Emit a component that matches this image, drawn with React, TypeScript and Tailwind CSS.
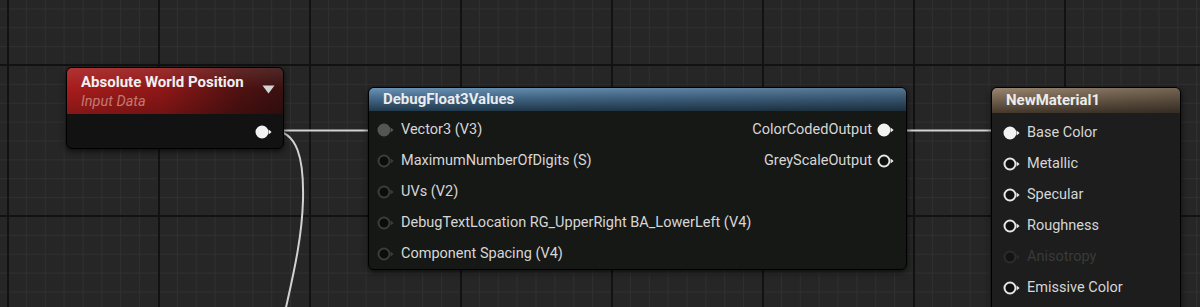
import React from "react";

type PinKind = "filled" | "outline" | "dim" | "connectedGray" | "emptyGray";

function Pin({ kind }: { kind: PinKind }) {
  let stroke = "#e6e6e6";
  let fill = "#101010";
  let arrow = "#e6e6e6";
  if (kind === "filled") {
    fill = "#f2f2f2";
    stroke = "#f2f2f2";
    arrow = "#f2f2f2";
  } else if (kind === "dim") {
    stroke = "#2c2c2c";
    fill = "#141414";
    arrow = "#2c2c2c";
  } else if (kind === "connectedGray") {
    stroke = "#555555";
    fill = "#555555";
    arrow = "#555555";
  } else if (kind === "emptyGray") {
    stroke = "#3c3c3c";
    fill = "#0c0c0c";
    arrow = "#3c3c3c";
  }
  return (
    <svg width="18" height="16" viewBox="0 0 18 16" className="shrink-0">
      <circle cx="7" cy="8" r="5.5" fill={fill} stroke={stroke} strokeWidth="2" />
      <path d="M13.7 5.5 L16.6 8 L13.7 10.5 Z" fill={arrow} />
    </svg>
  );
}

function InRow({ label, kind, dim }: { label: string; kind: PinKind; dim?: boolean }) {
  return (
    <div className="flex h-[31px] items-center whitespace-nowrap">
      <Pin kind={kind} />
      <span className={`ml-[6px] whitespace-nowrap text-[14.5px] ${dim ? "text-[#3a3a3a]" : "text-[#d6d6d6]"}`}>{label}</span>
    </div>
  );
}

function OutRow({ label, kind }: { label: string; kind: PinKind }) {
  return (
    <div className="flex h-[31px] items-center justify-end whitespace-nowrap">
      <span className="mr-[5px] whitespace-nowrap text-[14.5px] text-[#d6d6d6]">{label}</span>
      <Pin kind={kind} />
    </div>
  );
}

export default function App() {
  return (
    <div
      className="relative h-[307px] w-[1200px] overflow-hidden bg-[#262626] [background-image:linear-gradient(to_right,#121212_2px,transparent_2px),linear-gradient(to_bottom,#121212_2px,transparent_2px),linear-gradient(to_right,#303030_1px,transparent_1px),linear-gradient(to_bottom,#303030_1px,transparent_1px)] [background-size:151px_151px,151px_151px,18.875px_18.875px,18.875px_18.875px] [background-position:7px_64px,7px_64px,7px_65px,7px_65px]"
      style={{ fontFamily: "Roboto, 'Noto Sans', 'Liberation Sans', sans-serif" }}
    >
      {/* wires */}
      <svg className="absolute inset-0" width="1200" height="307" viewBox="0 0 1200 307">
        <path d="M272 130.5 L380 130.5" stroke="#d2d2d2" strokeWidth="2" fill="none" />
        <path d="M272 130.5 C298 130.5, 304 160, 303 200 S 292 280, 285 312" stroke="#d2d2d2" strokeWidth="2" fill="none" />
        <path d="M894 130.5 L1006 130.5" stroke="#d2d2d2" strokeWidth="2" fill="none" />
      </svg>

      {/* Absolute World Position */}
      <div className="absolute left-[66px] top-[67px] flex h-[82px] w-[218px] flex-col overflow-hidden rounded-[6px] border border-black bg-[#121212] shadow-[0_2px_6px_rgba(0,0,0,0.7)]">
        <div className="relative flex h-[46px] flex-col justify-center bg-[linear-gradient(to_bottom,rgba(255,255,255,0.10),rgba(255,255,255,0)_45%,rgba(0,0,0,0.2)),linear-gradient(to_right,#a81c1c,#8e1717_45%,#4f1111_80%,#3a1010)] pl-[14px]">
          <div className="text-[15px] font-bold leading-[18px] text-[#f0f0f0]">Absolute World Position</div>
          <div className="mt-[2px] text-[14.5px] italic leading-[17px] text-[#c47a72]">Input Data</div>
          <svg className="absolute right-[8px] top-[17px]" width="13" height="9" viewBox="0 0 13 9">
            <path d="M0.5 0.5 L12.5 0.5 L6.5 8.5 Z" fill="#d4d4d4" />
          </svg>
        </div>
        <div className="flex flex-1 items-center justify-end pr-[10px] pt-[1px]">
          <Pin kind="filled" />
        </div>
      </div>

      {/* DebugFloat3Values */}
      <div className="absolute left-[368px] top-[87px] flex h-[183px] w-[539px] flex-col overflow-hidden rounded-[6px] border border-black bg-[#161816] shadow-[0_2px_6px_rgba(0,0,0,0.7)]">
        <div className="flex h-[25px] items-center bg-[linear-gradient(to_right,rgba(0,0,0,0),rgba(0,0,0,0.2)),linear-gradient(to_bottom,#6a93b6,#44698a_45%,#223a4c)] pl-[14px]">
          <span className="text-[15px] font-bold text-[#ececec]">DebugFloat3Values</span>
        </div>
        <div className="flex flex-1 justify-between pt-[4px]">
          <div className="flex shrink-0 flex-col pl-[8px]">
            <InRow label="Vector3 (V3)" kind="connectedGray" />
            <InRow label="MaximumNumberOfDigits (S)" kind="emptyGray" />
            <InRow label="UVs (V2)" kind="emptyGray" />
            <InRow label="DebugTextLocation RG_UpperRight BA_LowerLeft (V4)" kind="emptyGray" />
            <InRow label="Component Spacing (V4)" kind="emptyGray" />
          </div>
          <div className="flex shrink-0 flex-col pr-[11px]">
            <OutRow label="ColorCodedOutput" kind="filled" />
            <OutRow label="GreyScaleOutput" kind="outline" />
          </div>
        </div>
      </div>

      {/* NewMaterial1 */}
      <div className="absolute left-[991px] top-[87px] flex h-[240px] w-[190px] flex-col overflow-hidden rounded-[6px] border border-black bg-[#1c1d1c] shadow-[0_2px_6px_rgba(0,0,0,0.7)]">
        <div className="flex h-[25px] items-center bg-[linear-gradient(to_right,rgba(0,0,0,0),rgba(0,0,0,0.25)),linear-gradient(to_bottom,#9a8670,#75634f_45%,#45392d)] pl-[14px]">
          <span className="text-[15px] font-bold text-[#ececec]">NewMaterial1</span>
        </div>
        <div className="flex flex-col pl-[11px] pt-[4px]">
          <InRow label="Base Color" kind="filled" />
          <InRow label="Metallic" kind="outline" />
          <InRow label="Specular" kind="outline" />
          <InRow label="Roughness" kind="outline" />
          <InRow label="Anisotropy" kind="dim" dim />
          <InRow label="Emissive Color" kind="outline" />
        </div>
      </div>
    </div>
  );
}
